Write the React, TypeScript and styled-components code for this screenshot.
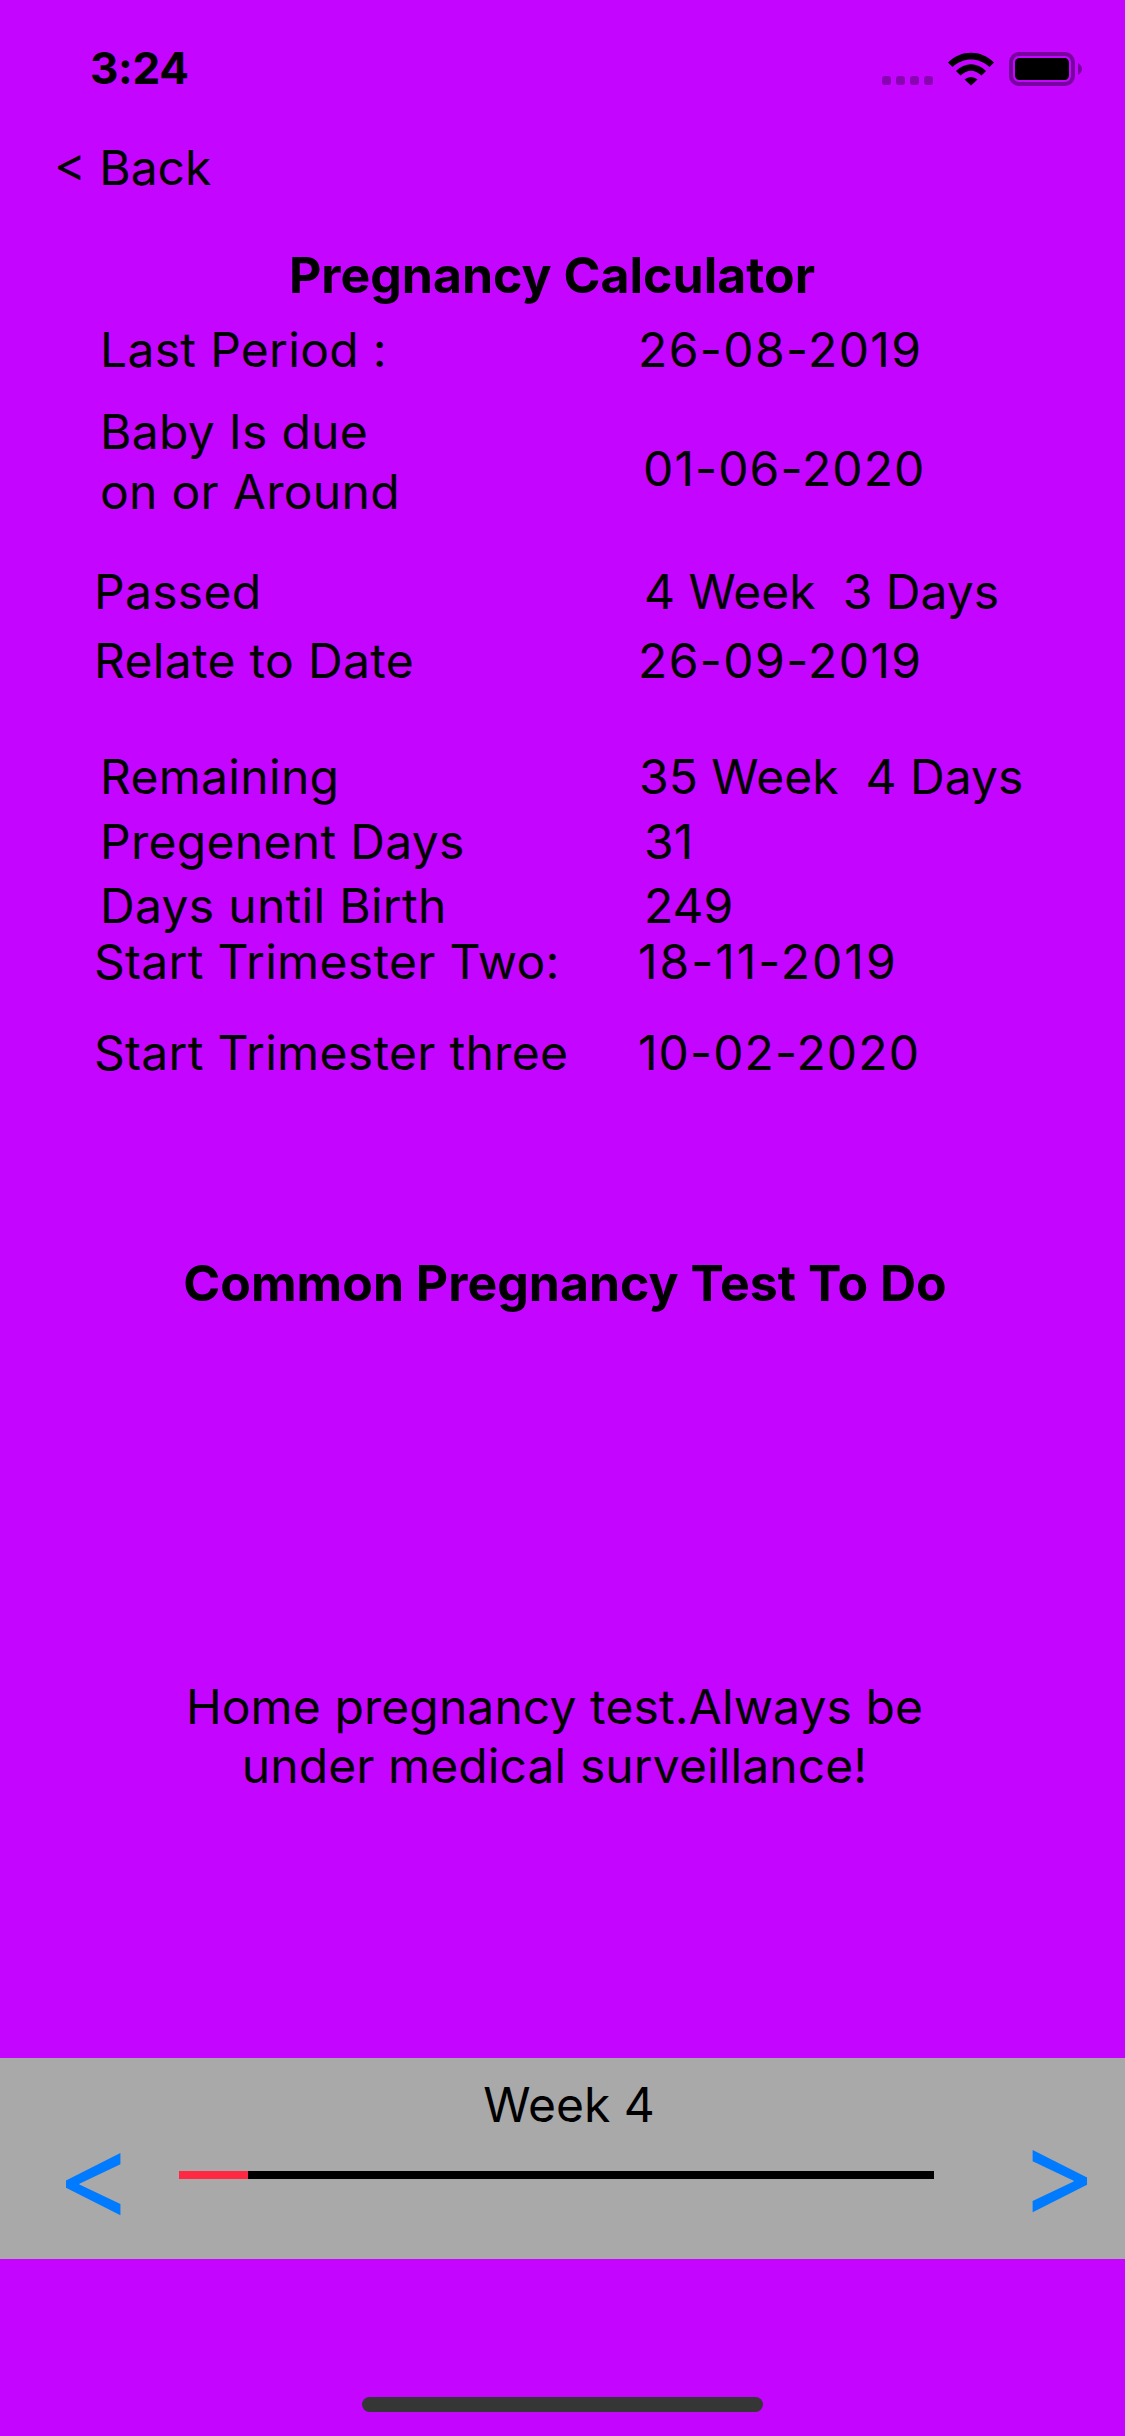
import React from 'react';
import styled, { createGlobalStyle } from 'styled-components';

const Global = createGlobalStyle`
  html, body { margin: 0; padding: 0; background: #c405ff; }
  #root { width: 1125px; height: 2436px; }
`;

const Screen = styled.div`
  width: 1125px;
  height: 2436px;
  overflow: hidden;
  background: #c405ff;
  color: #000;
  font-family: Inter, "Liberation Sans", sans-serif;
  font-size: 48px;
  display: flex;
  flex-direction: column;
`;

const StatusBar = styled.div`
  height: 138px;
  display: flex;
  align-items: flex-start;
  justify-content: space-between;
  padding: 44px 43px 0 90px;
  box-sizing: border-box;
`;

const Time = styled.div`
  font-size: 44px;
  line-height: 48px;
  font-weight: 700;
  letter-spacing: -0.3px;
`;

const StatusIcons = styled.svg`
  width: 200px;
  height: 40px;
  margin-top: 8px;
`;

const BackLink = styled.div`
  height: 60px;
  line-height: 60px;
  padding-left: 54px;
`;

const Title = styled.div<{ $gap: number; $x: number }>`
  height: 60px;
  line-height: 60px;
  margin-top: ${p => p.$gap}px;
  margin-left: ${p => p.$x}px;
  font-size: 50px;
  font-weight: 700;
  width: 600px;
  white-space: nowrap;
  display: flex;
  justify-content: center;
`;

const Row = styled.div<{ $gap: number }>`
  display: flex;
  margin-top: ${p => p.$gap}px;
  line-height: 50px;
`;

const Label = styled.div<{ $tall?: boolean }>`
  white-space: pre-line;
  letter-spacing: 0.3px;
  line-height: ${p => (p.$tall ? 60 : 50)}px;
`;

const Cell = styled.div<{ $x: number; $w: number; $top?: number; $spacing?: number }>`
  margin-left: ${p => p.$x}px;
  width: ${p => p.$w}px;
  padding-top: ${p => p.$top ?? 0}px;
  letter-spacing: ${p => p.$spacing ?? 0}px;
  white-space: pre;
  flex: none;
`;

const Note = styled.div`
  margin-top: 364px;
  line-height: 59px;
  text-align: center;
  letter-spacing: 0.1px;
  width: 1109px;
`;

const Footer = styled.div`
  margin-top: 263px;
  height: 201px;
  background: #a9a9a9;
  display: flex;
  flex-direction: column;
`;

const WeekLabel = styled.div`
  height: 60px;
  line-height: 60px;
  margin-top: 17px;
  text-align: center;
  width: 1138px;
`;

const Nav = styled.div`
  display: flex;
  align-items: center;
  height: 60px;
  margin-top: 10px;
`;

const Arrow = styled.div<{ $shift: number }>`
  width: 54px;
  flex: none;
  height: 60px;
  line-height: 60px;
  display: flex;
  justify-content: center;
  color: #007aff;
  font-size: 118px;
  font-weight: 400;
  transform: translateY(${p => p.$shift}px);
`;

const Track = styled.div`
  width: 755px;
  height: 8px;
  margin: 0 97px 0 59px;
  background: #000;
  flex: none;
`;

const Progress = styled.div`
  height: 100%;
  background: #ff2944;
`;

const HomeIndicator = styled.div`
  width: 401px;
  height: 15px;
  margin: 138px 0 0 362px;
  border-radius: 8px;
  background: #363636;
`;

const rows = [
  { gap: 20, label: 'Last Period :', lx: 100, v: '26-08-2019', vx: 638, sp: 1.4 },
  { gap: 27, label: 'Baby Is due\non or Around', lx: 100, v: '01-06-2020', vx: 643, tall: true, top: 42, sp: 1.1 },
  { gap: 45, label: 'Passed', lx: 94, v: '4 Week  3 Days', vx: 644 },
  { gap: 19, label: 'Relate to Date', lx: 94, v: '26-09-2019', vx: 638, sp: 1.4 },
  { gap: 66, label: 'Remaining', lx: 100, v: '35 Week  4 Days', vx: 639 },
  { gap: 15, label: 'Pregenent Days', lx: 100, v: '31', vx: 644 },
  { gap: 14, label: 'Days until Birth', lx: 100, v: '249', vx: 644 },
  { gap: 6, label: 'Start Trimester Two:', lx: 94, v: '18-11-2019', vx: 638, sp: 2 },
  { gap: 41, label: 'Start Trimester three', lx: 94, v: '10-02-2020', vx: 638, sp: 1.1 },
];

const weekProgress = (69 / 755) * 100;

export default function App() {
  return (
    <Screen>
      <Global />
      <StatusBar>
        <Time>3:24</Time>
        <StatusIcons viewBox="0 0 200 40">
          <g fill="#000" fillOpacity="0.3">
            <rect x="0" y="24" width="9" height="9" rx="3" />
            <rect x="14" y="24" width="9" height="9" rx="3" />
            <rect x="28" y="24" width="9" height="9" rx="3" />
            <rect x="42" y="24" width="9" height="9" rx="3" />
          </g>
          <path d="M66 10.5 C79 -2.5 99 -2.5 112 10.5 L107.5 15 C97 5 81 5 70.5 15 Z" fill="#000" />
          <path d="M74 19 C83 10 95 10 104 19 L99.5 23.5 C92.5 17 85.500 17 78.500 23.500 Z" fill="#000" />
          <path d="M82.500 27.500 C87 24 91 24 95.500 27.500 L89 33.500 Z" fill="#000" />
          <rect x="129" y="2" width="62" height="30" rx="8" fill="none" stroke="#000" strokeOpacity="0.38" strokeWidth="4" />
          <rect x="133" y="6" width="54" height="22" rx="4.500" fill="#000" />
          <path d="M196 11 C199 13 200 15 200 17 C200 19 199 21 196 23 Z" fill="#000" fillOpacity="0.38" />
        </StatusIcons>
      </StatusBar>
      <BackLink>&lt; Back</BackLink>
      <Title $gap={47} $x={252}>Pregnancy Calculator</Title>
      {rows.map(r => (
        <Row key={r.label} $gap={r.gap}>
          <Cell $x={r.lx} $w={r.vx - r.lx}>
            <Label $tall={r.tall}>{r.label}</Label>
          </Cell>
          <Cell $x={0} $w={480} $top={r.top} $spacing={r.sp}>{r.v}</Cell>
        </Row>
      ))}
      <Title $gap={175} $x={265}>Common Pregnancy Test To Do</Title>
      <Note>Home pregnancy test.Always be<br />under medical surveillance!</Note>
      <Footer>
        <WeekLabel>Week 4</WeekLabel>
        <Nav>
          <Cell $x={68} $w={52}>
            <Arrow $shift={0}>&lt;</Arrow>
          </Cell>
          <Track>
            <Progress style={{ width: `${weekProgress}%` }} />
          </Track>
          <Arrow $shift={-3}>&gt;</Arrow>
        </Nav>
      </Footer>
      <HomeIndicator />
    </Screen>
  );
}
